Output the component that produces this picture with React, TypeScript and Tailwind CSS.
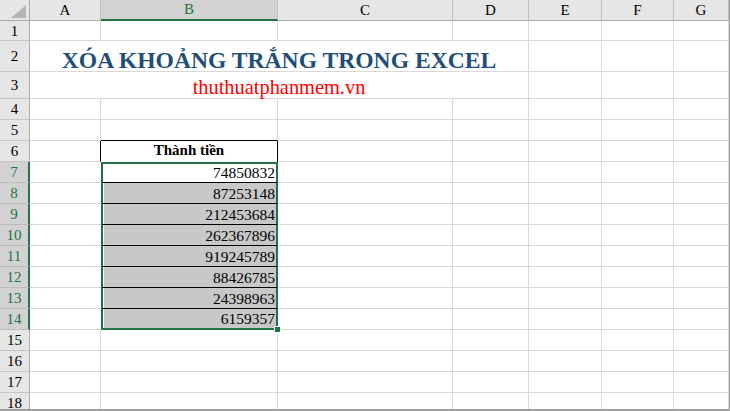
import React from "react";

const colWidths = ["w-[71px]", "w-[177px]", "w-[175px]", "w-[76px]", "w-[73px]", "w-[72px]", "flex-1"];
const cols = ["A", "B", "C", "D", "E", "F", "G"];

const values: Record<number, string> = {
  7: "74850832",
  8: "87253148",
  9: "212453684",
  10: "262367896",
  11: "919245789",
  12: "88426785",
  13: "24398963",
  14: "6159357",
};

const rowHeight = (r: number) => {
  if (r === 1) return "h-[20px]";
  if (r === 2) return "h-[31px]";
  if (r === 3) return "h-[27px]";
  return "h-[21px]";
};

const selected = (r: number) => r >= 7 && r <= 14;

const Corner = () => (
  <div className="w-[30px] h-[21px] shrink-0 bg-[#e6e6e6] border-r border-b border-[#ababab] flex items-end justify-end pr-[3px] pb-[2px]">
    <svg width="15" height="13" viewBox="0 0 15 13">
      <polygon points="15,0 15,13 0,13" fill="#b4b4b4" />
    </svg>
  </div>
);

const RowHeader = ({ r }: { r: number }) => (
  <div
    className={
      "w-[30px] shrink-0 flex items-center justify-center text-[15px] border-b " +
      (selected(r)
        ? "bg-[#d2d2d2] text-[#217346] border-r-2 border-r-[#217346] border-b-[#bcbcbc]"
        : "bg-[#e6e6e6] text-black border-r border-r-[#ababab] border-b-[#c6c6c6]")
    }
  >
    <span className="pt-[1px]">{r}</span>
  </div>
);

const Cell = ({ r, c }: { r: number; c: number }) => {
  const w = colWidths[c];
  // header cell of the table
  if (c === 1 && r === 6) {
    return (
      <div className={w + " shrink-0 border-r border-black flex items-end justify-center pb-[1px] font-bold text-[15px]"}>
        Thành tiền
      </div>
    );
  }
  if (c === 1 && selected(r)) {
    const bg = r === 7 ? "bg-white" : "bg-[#c8c8c8]";
    const edge =
      r === 7
        ? " border-t-2 border-b border-t-[#217346] border-b-black"
        : r === 14
        ? " border-b-2 border-b-[#217346]"
        : " border-b border-b-black";
    return (
      <div className={w + " shrink-0 relative border-l-2 border-r-2 border-x-[#217346] " + edge}>
        <div className={"h-full flex items-end justify-end pr-[1px] text-[15.5px] leading-[19px] " + bg + (r === 7 ? "" : " ml-[1px]")}>
          {values[r]}
        </div>
        {r === 14 && (
          <div className="absolute -right-[5px] -bottom-[5px] w-[7px] h-[7px] bg-[#217346] border border-white" />
        )}
      </div>
    );
  }
  let cls = w + " shrink-0 border-r border-b border-[#d9d9d9]";
  if (c === 1 && r === 5) cls = w + " shrink-0 border-r border-b border-r-[#d9d9d9] border-b-black";
  if (c === 0 && r === 6) cls = w + " shrink-0 border-r border-b border-r-black border-b-[#d9d9d9]";
  if (c === 0 && selected(r)) cls = w + " shrink-0 border-b border-[#d9d9d9]";
  return <div className={cls} />;
};

const Row = ({ r }: { r: number }) => {
  if (r === 2 || r === 3) {
    return (
      <div className={"flex " + rowHeight(r)}>
        <RowHeader r={r} />
        <div className="w-[499px] shrink-0 border-r border-b border-[#d9d9d9] flex items-end justify-center">
          {r === 2 ? (
            <span className="font-bold text-[#1f4e79] text-[23.6px] leading-[22px]">
              XÓA KHOẢNG TRẮNG TRONG EXCEL
            </span>
          ) : (
            <span className="text-[#ff0000] text-[20.4px] leading-[21px]">thuthuatphanmem.vn</span>
          )}
        </div>
        {[4, 5, 6].map((c) => (
          <Cell key={c} r={r} c={c} />
        ))}
      </div>
    );
  }
  return (
    <div className={"flex " + rowHeight(r)}>
      <RowHeader r={r} />
      {cols.map((_, c) => (
        <Cell key={c} r={r} c={c} />
      ))}
    </div>
  );
};

export default function App() {
  const rows = Array.from({ length: 18 }, (_, i) => i + 1);
  return (
    <div className="w-[730px] h-[411px] overflow-hidden bg-white border-r border-b-2 border-[#9e9e9e] font-['Liberation_Serif',serif] text-black">
      <div className="flex h-[21px]">
        <Corner />
        {cols.map((l, c) => (
          <div
            key={l}
            className={
              colWidths[c] +
              " shrink-0 flex items-center justify-center text-[15px] border-r border-r-[#bdbdbd] " +
              (l === "B"
                ? "bg-[#d2d2d2] text-[#217346] border-b-2 border-b-[#217346]"
                : "bg-[#e6e6e6] border-b border-b-[#ababab]")
            }
          >
            {l}
          </div>
        ))}
      </div>
      {rows.map((r) => (
        <Row key={r} r={r} />
      ))}
    </div>
  );
}
